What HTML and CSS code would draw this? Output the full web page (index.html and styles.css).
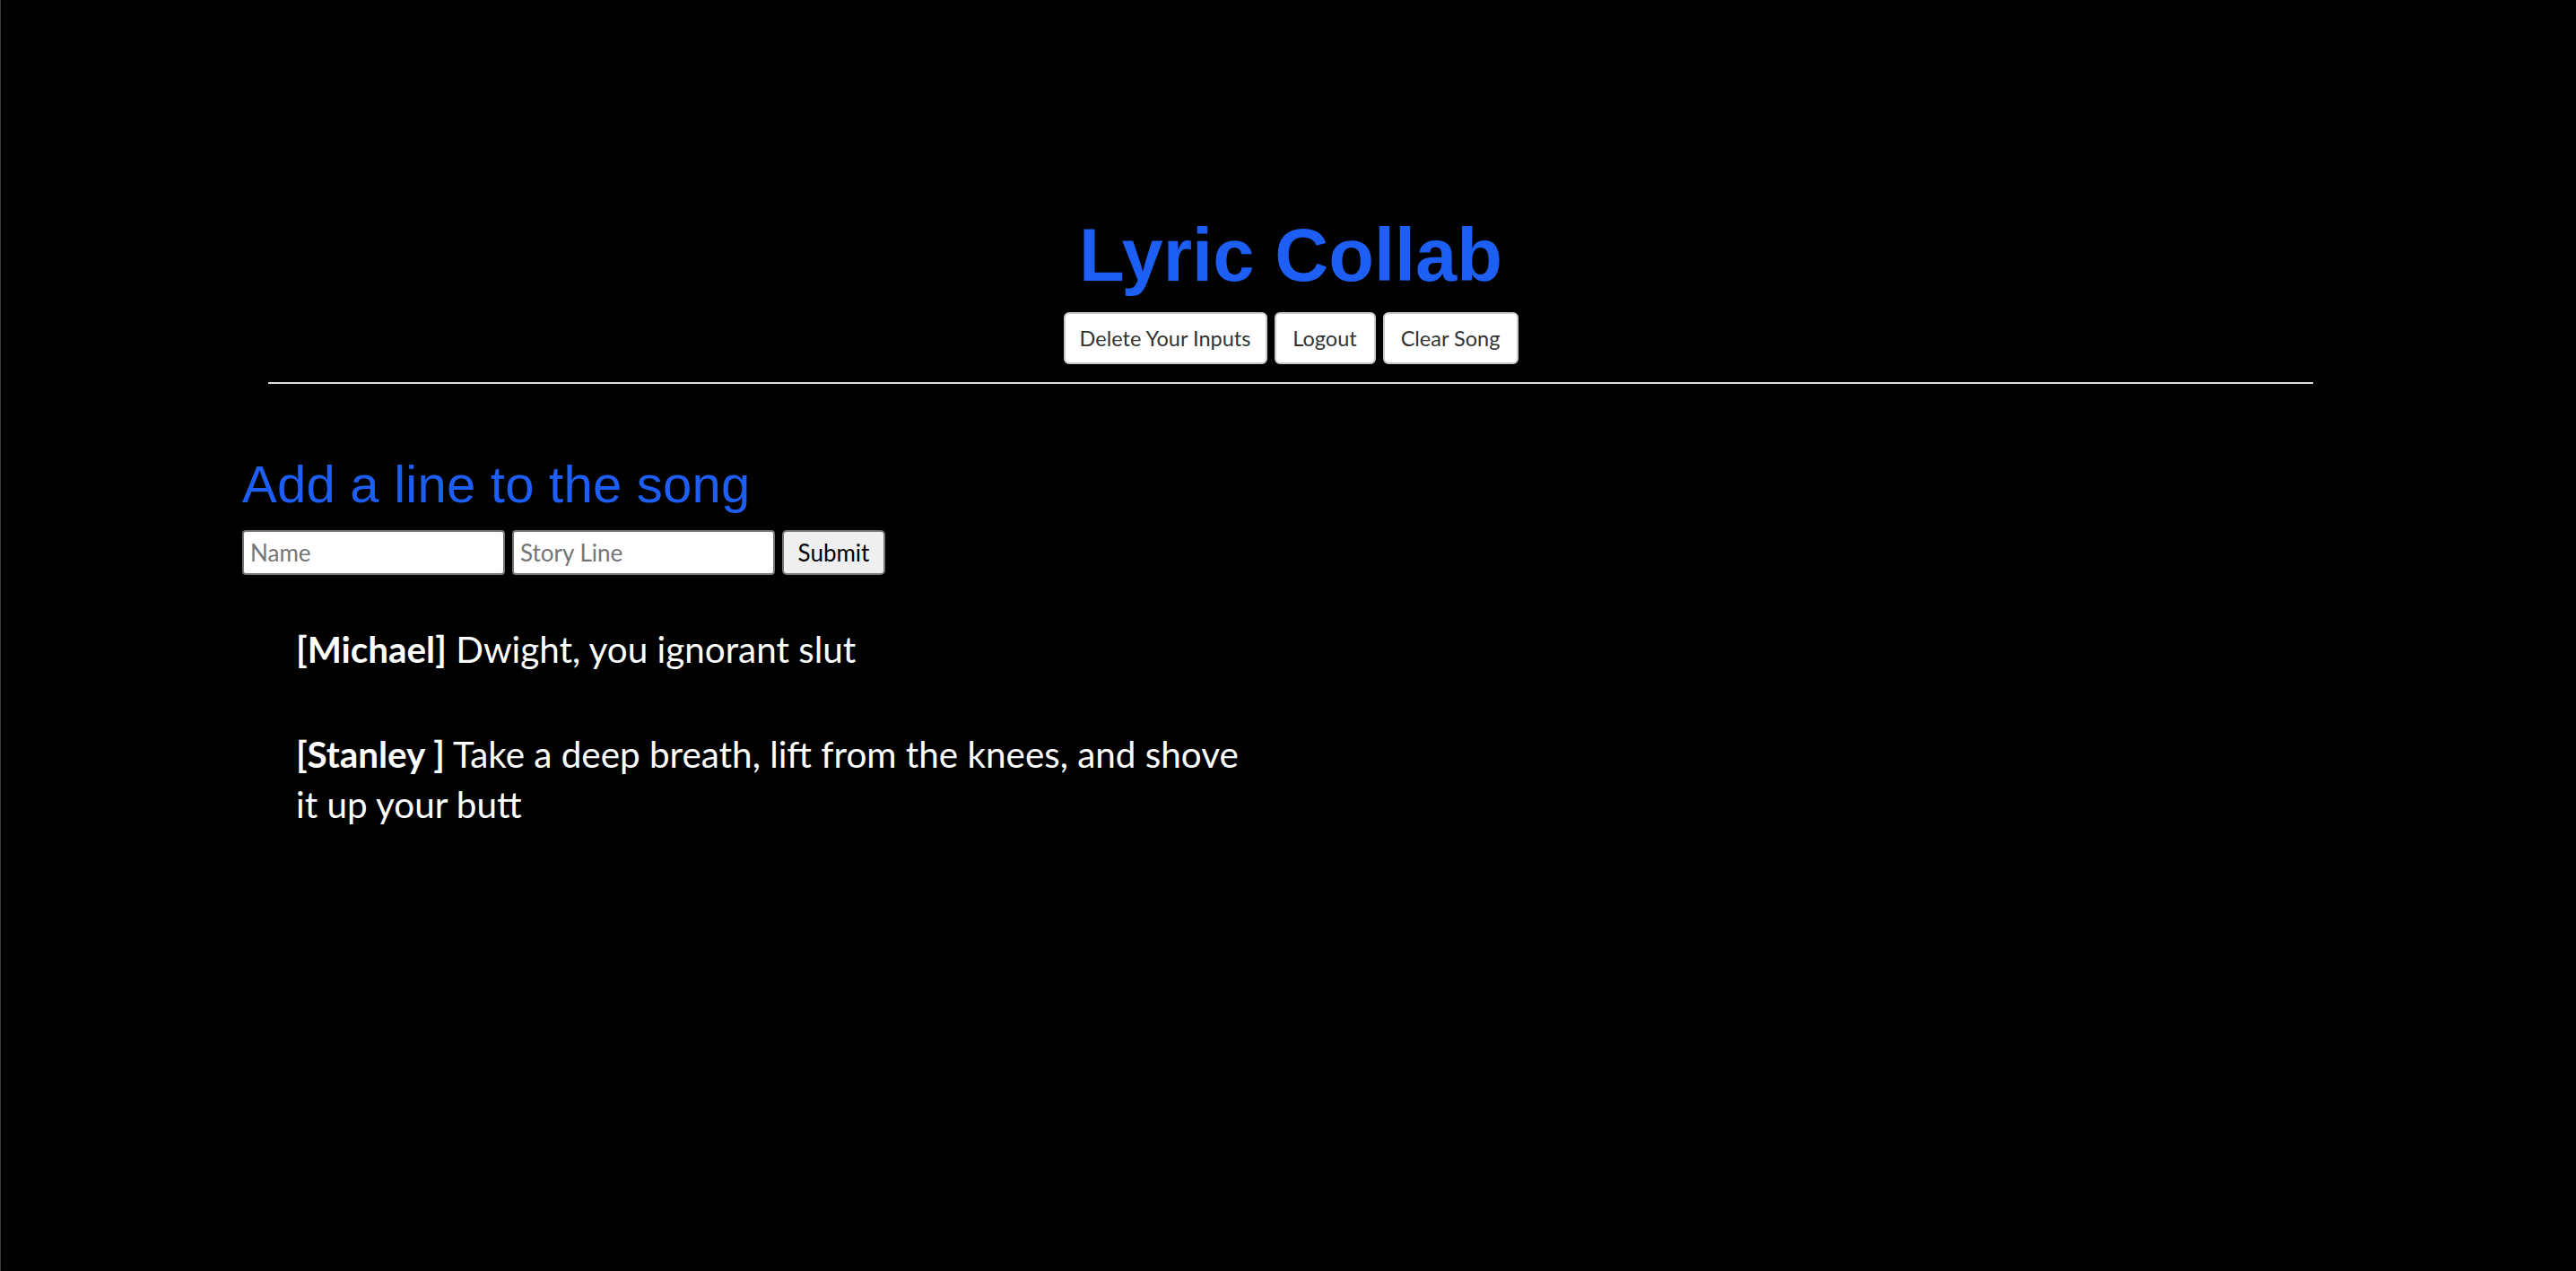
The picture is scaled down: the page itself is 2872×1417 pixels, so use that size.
FILE: index.html
```html
<!DOCTYPE html>
<html lang="en">
<head>
<meta charset="utf-8">
<title>Lyric Collab</title>
<link rel="stylesheet" href="styles.css">
</head>
<body>
<div class="page">
  <header class="top">
    <h1 class="title">Lyric Collab</h1>
    <div class="actions">
      <button class="btn btn-delete" type="button">Delete Your Inputs</button>
      <button class="btn btn-logout" type="button">Logout</button>
      <button class="btn btn-clear" type="button">Clear Song</button>
    </div>
    <div class="rule"></div>
  </header>
  <main class="content">
    <h2 class="add-title">Add a line to the song</h2>
    <form class="add-form">
      <input class="field" type="text" placeholder="Name">
      <input class="field" type="text" placeholder="Story Line">
      <button class="submit" type="button">Submit</button>
    </form>
    <div class="lyrics">
      <p class="lyric"><b class="who">[Michael]</b> Dwight, you ignorant slut</p>
      <p class="lyric"><b class="who">[Stanley ]</b> Take a deep breath, lift from the knees, and shove it up your butt</p>
    </div>
  </main>
</div>
</body>
</html>
```
FILE: styles.css
```css
html, body {
  margin: 0;
  padding: 0;
  background: #000;
}

.page {
  min-height: 1417px;
  box-sizing: border-box;
  border-left: 1px solid #3c3c3c;
  padding-top: 243px;
}

.top {
  padding-left: 5px;
  display: flex;
  flex-direction: column;
  align-items: center;
}

.title {
  margin: 0;
  font-family: "Liberation Sans", Arial, sans-serif;
  font-weight: bold;
  font-size: 83px;
  line-height: 83px;
  color: #1d5ef4;
}

.actions {
  margin-top: 22px;
  display: flex;
  gap: 8px;
}

.btn {
  height: 58px;
  box-sizing: border-box;
  background: #fff;
  border: 2px solid #c9c9c9;
  border-radius: 6px;
  font-family: Lato, "Open Sans", sans-serif;
  font-size: 23.5px;
  color: #333;
  padding: 0;
}

.btn-delete { width: 227px; }
.btn-logout { width: 113px; }
.btn-clear { width: 151px; }

.rule {
  margin-top: 20px;
  width: 2280px;
  height: 2px;
  background: #dcdcdc;
}

.content {
  padding-left: 269px;
}

.add-title {
  margin: 83px 0 0 0;
  font-family: "Liberation Sans", Arial, sans-serif;
  font-weight: normal;
  font-size: 58px;
  line-height: 58px;
  letter-spacing: 0.25px;
  color: #1d5ef4;
}

.add-form {
  margin-top: 22px;
  display: flex;
  gap: 8px;
}

.field {
  width: 293px;
  height: 50px;
  box-sizing: border-box;
  border: 2px solid #767676;
  border-radius: 4px;
  background: #fff;
  padding: 0 7px;
  font-family: Lato, "Open Sans", sans-serif;
  font-size: 26px;
  color: #000;
}

.field::placeholder {
  color: #757575;
}

.submit {
  width: 115px;
  height: 50px;
  box-sizing: border-box;
  border: 2px solid #767676;
  border-radius: 5px;
  background: #efefef;
  padding: 0;
  font-family: Lato, "Open Sans", sans-serif;
  font-size: 26px;
  color: #000;
}

.lyrics {
  margin-top: 55px;
  padding-left: 60px;
  width: 1065px;
}

.lyric {
  margin: 0 0 60px 0;
  font-family: Lato, "Open Sans", sans-serif;
  font-size: 40.4px;
  line-height: 56.7px;
  color: #fff;
}

.who {
  font-weight: bold;
}
```
